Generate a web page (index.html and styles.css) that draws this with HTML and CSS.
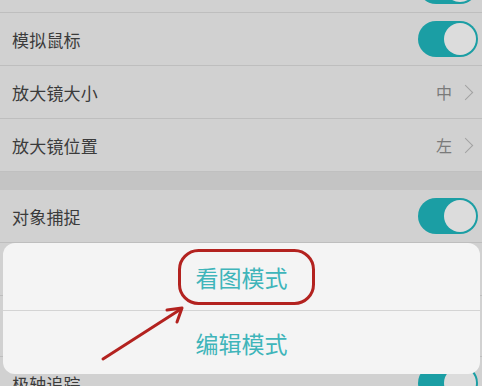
FILE: index.html
```html
<!DOCTYPE html>
<html lang="zh">
<head>
<meta charset="utf-8">
<link rel="stylesheet" href="styles.css">
</head>
<body>
<div class="screen">
  <div class="group first">
    <div class="row"><span class="label">显示坐标</span><span class="switch"><span class="knob"></span></span></div>
    <div class="row"><span class="label">模拟鼠标</span><span class="switch"><span class="knob"></span></span></div>
    <div class="row"><span class="label">放大镜大小</span><span class="value">中<span class="chev"></span></span></div>
    <div class="row last"><span class="label">放大镜位置</span><span class="value">左<span class="chev"></span></span></div>
  </div>
  <div class="gap"></div>
  <div class="group">
    <div class="row"><span class="label">对象捕捉</span><span class="switch"><span class="knob"></span></span></div>
    <div class="row"><span class="label">正交模式</span><span class="switch"><span class="knob"></span></span></div>
    <div class="row tall"><span class="label">栅格捕捉</span><span class="switch"><span class="knob"></span></span></div>
    <div class="row"><span class="label">极轴追踪</span><span class="switch"><span class="knob"></span></span></div>
  </div>

  <div class="sheet">
    <div class="sheet-item top">看图模式</div>
    <div class="sheet-item">编辑模式</div>
  </div>

  <svg class="annot" width="482" height="386" viewBox="0 0 482 386">
    <rect x="179.5" y="250.5" width="134" height="53" rx="19" ry="19" fill="none" stroke="#b3221f" stroke-width="3"/>
    <line x1="103" y1="359" x2="181" y2="309" stroke="#b3221f" stroke-width="3" stroke-linecap="round"/>
    <polyline points="167,310 182,308 177,322" fill="none" stroke="#b3221f" stroke-width="3" stroke-linecap="round" stroke-linejoin="round"/>
  </svg>
</div>
</body>
</html>
```

FILE: styles.css
```css
html, body {
  margin: 0;
  padding: 0;
}
body {
  background: #d0d0d0;
  font-family: "Noto Sans CJK SC", "Noto Sans", sans-serif;
}
.screen {
  position: relative;
  width: 482px;
  height: 386px;
  overflow: hidden;
  background: #d0d0d0;
}
.group {
  display: flex;
  flex-direction: column;
  background: #d1d1d1;
}
.group.first {
  margin-top: -40px;
}
.row {
  height: 52px;
  display: flex;
  align-items: center;
  justify-content: space-between;
  padding: 0 4px 0 12px;
  border-bottom: 1px solid #bebebe;
}
.row.last {
  border-bottom: none;
}
.row.tall {
  height: 60px;
}
.label {
  font-size: 17px;
  color: #3b3b3b;
  letter-spacing: 0.2px;
}
.switch {
  position: relative;
  width: 60px;
  height: 36px;
  border-radius: 18px;
  background: #1b9ea4;
  display: flex;
  align-items: center;
  justify-content: flex-end;
  padding: 0 2px;
  box-sizing: border-box;
}
.knob {
  width: 32px;
  height: 32px;
  border-radius: 50%;
  background: #dcdcdc;
}
.value {
  display: flex;
  align-items: center;
  gap: 8px;
  font-size: 16px;
  color: #7a7a7a;
  padding-right: 5px;
}
.chev {
  width: 10px;
  height: 10px;
  border-right: 1.6px solid #a2a2a2;
  border-top: 1.6px solid #a2a2a2;
  transform: rotate(45deg);
  margin-right: 2px;
}
.gap {
  height: 18px;
  background: #c4c4c4;
  border-top: 1px solid #c0c0c0;
}
.sheet {
  position: absolute;
  left: 3px;
  top: 243px;
  width: 477px;
  height: 131px;
  border-radius: 12px;
  background: #f4f4f4;
  display: flex;
  flex-direction: column;
}
.sheet-item {
  flex: 1;
  display: flex;
  align-items: center;
  justify-content: center;
  font-size: 23px;
  color: #3fb5ba;
}
.sheet-item.top {
  flex: 0 0 67px;
  border-bottom: 1px solid #d4d4d4;
}
.annot {
  position: absolute;
  left: 0;
  top: 0;
  pointer-events: none;
}
```
